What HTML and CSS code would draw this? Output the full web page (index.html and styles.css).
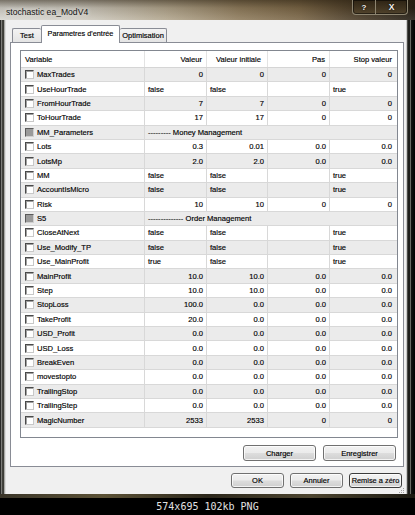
FILE: index.html
```html
<!DOCTYPE html>
<html>
<head>
<meta charset="utf-8">
<link rel="stylesheet" href="styles.css">
</head>
<body>
<div class="screen">
  <div class="window">
    <div class="titlebar">
      <span class="title">stochastic ea_ModV4</span>
      <div class="caption-buttons">
        <span class="cb help">?</span>
        <span class="cb close">X</span>
      </div>
    </div>
    <div class="winbody">
      <div class="frame-left"></div>
      <div class="client">
        <div class="tabs">
          <div class="tab t-test">Test</div>
          <div class="tab sel t-params">Parametres d'entrée</div>
          <div class="tab t-opt">Optimisation</div>
        </div>
        <div class="panel">
          <div class="grid">
            <div class="hdr">
              <div class="h">Variable</div>
              <div class="h n">Valeur</div>
              <div class="h n vi">Valeur initiale</div>
              <div class="h n">Pas</div>
              <div class="h n last">Stop valeur</div>
            </div>
            <div class="row odd"><div class="c v"><span class="cbx"></span>MaxTrades</div><div class="c n">0</div><div class="c n">0</div><div class="c n">0</div><div class="c n last">0</div></div>
            <div class="row"><div class="c v"><span class="cbx"></span>UseHourTrade</div><div class="c">false</div><div class="c">false</div><div class="c"></div><div class="c last">true</div></div>
            <div class="row odd"><div class="c v"><span class="cbx"></span>FromHourTrade</div><div class="c n">7</div><div class="c n">7</div><div class="c n">0</div><div class="c n last">0</div></div>
            <div class="row"><div class="c v"><span class="cbx"></span>ToHourTrade</div><div class="c n">17</div><div class="c n">17</div><div class="c n">0</div><div class="c n last">0</div></div>
            <div class="row odd"><div class="c v"><span class="cbx on"></span>MM_Parameters</div><div class="c span">--------- Money Management</div></div>
            <div class="row"><div class="c v"><span class="cbx"></span>Lots</div><div class="c n">0.3</div><div class="c n">0.01</div><div class="c n">0.0</div><div class="c n last">0.0</div></div>
            <div class="row odd"><div class="c v"><span class="cbx"></span>LotsMp</div><div class="c n">2.0</div><div class="c n">2.0</div><div class="c n">0.0</div><div class="c n last">0.0</div></div>
            <div class="row"><div class="c v"><span class="cbx"></span>MM</div><div class="c">false</div><div class="c">false</div><div class="c"></div><div class="c last">true</div></div>
            <div class="row odd"><div class="c v"><span class="cbx"></span>AccountIsMicro</div><div class="c">false</div><div class="c">false</div><div class="c"></div><div class="c last">true</div></div>
            <div class="row"><div class="c v"><span class="cbx"></span>Risk</div><div class="c n">10</div><div class="c n">10</div><div class="c n">0</div><div class="c n last">0</div></div>
            <div class="row odd"><div class="c v"><span class="cbx on"></span>S5</div><div class="c span">-------------- Order Management</div></div>
            <div class="row"><div class="c v"><span class="cbx"></span>CloseAtNext</div><div class="c">false</div><div class="c">false</div><div class="c"></div><div class="c last">true</div></div>
            <div class="row odd"><div class="c v"><span class="cbx"></span>Use_Modify_TP</div><div class="c">false</div><div class="c">false</div><div class="c"></div><div class="c last">true</div></div>
            <div class="row"><div class="c v"><span class="cbx"></span>Use_MainProfit</div><div class="c">true</div><div class="c">false</div><div class="c"></div><div class="c last">true</div></div>
            <div class="row odd"><div class="c v"><span class="cbx"></span>MainProfit</div><div class="c n">10.0</div><div class="c n">10.0</div><div class="c n">0.0</div><div class="c n last">0.0</div></div>
            <div class="row"><div class="c v"><span class="cbx"></span>Step</div><div class="c n">10.0</div><div class="c n">10.0</div><div class="c n">0.0</div><div class="c n last">0.0</div></div>
            <div class="row odd"><div class="c v"><span class="cbx"></span>StopLoss</div><div class="c n">100.0</div><div class="c n">0.0</div><div class="c n">0.0</div><div class="c n last">0.0</div></div>
            <div class="row"><div class="c v"><span class="cbx"></span>TakeProfit</div><div class="c n">20.0</div><div class="c n">0.0</div><div class="c n">0.0</div><div class="c n last">0.0</div></div>
            <div class="row odd"><div class="c v"><span class="cbx"></span>USD_Profit</div><div class="c n">0.0</div><div class="c n">0.0</div><div class="c n">0.0</div><div class="c n last">0.0</div></div>
            <div class="row"><div class="c v"><span class="cbx"></span>USD_Loss</div><div class="c n">0.0</div><div class="c n">0.0</div><div class="c n">0.0</div><div class="c n last">0.0</div></div>
            <div class="row odd"><div class="c v"><span class="cbx"></span>BreakEven</div><div class="c n">0.0</div><div class="c n">0.0</div><div class="c n">0.0</div><div class="c n last">0.0</div></div>
            <div class="row"><div class="c v"><span class="cbx"></span>movestopto</div><div class="c n">0.0</div><div class="c n">0.0</div><div class="c n">0.0</div><div class="c n last">0.0</div></div>
            <div class="row odd"><div class="c v"><span class="cbx"></span>TrailingStop</div><div class="c n">0.0</div><div class="c n">0.0</div><div class="c n">0.0</div><div class="c n last">0.0</div></div>
            <div class="row"><div class="c v"><span class="cbx"></span>TrailingStep</div><div class="c n">0.0</div><div class="c n">0.0</div><div class="c n">0.0</div><div class="c n last">0.0</div></div>
            <div class="row odd"><div class="c v"><span class="cbx"></span>MagicNumber</div><div class="c n">2533</div><div class="c n">2533</div><div class="c n">0</div><div class="c n last">0</div></div>
          </div>
          <div class="panel-buttons">
            <div class="btn wide">Charger</div>
            <div class="btn wide">Enregistrer</div>
          </div>
        </div>
        <div class="dialog-buttons">
          <div class="btn small">OK</div>
          <div class="btn small">Annuler</div>
          <div class="btn small focus">Remise a zéro</div>
        </div>
        <svg class="grip" width="7" height="7" viewBox="0 0 7 7">
          <rect x="5" y="1" width="1" height="1" fill="#a0a0a0"/>
          <rect x="3" y="3" width="1" height="1" fill="#a0a0a0"/>
          <rect x="5" y="3" width="1" height="1" fill="#a0a0a0"/>
          <rect x="1" y="5" width="1" height="1" fill="#a0a0a0"/>
          <rect x="3" y="5" width="1" height="1" fill="#a0a0a0"/>
          <rect x="5" y="5" width="1" height="1" fill="#a0a0a0"/>
        </svg>
      </div>
      <div class="frame-right"></div>
    </div>
    <div class="frame-bottom"></div>
  </div>
  <div class="caption">574x695 102kb PNG</div>
</div>
</body>
</html>
```

FILE: styles.css
```css
* { box-sizing: border-box; margin: 0; padding: 0; }
html, body { width: 415px; height: 515px; overflow: hidden; background: #000; }
body { font-family: "Liberation Sans", Arial, sans-serif; color: #000; }

.screen { width: 415px; height: 515px; display: flex; flex-direction: column; }
.window { height: 498px; display: flex; flex-direction: column; background: #2b2820; }

.titlebar {
  height: 20px;
  display: flex;
  align-items: flex-start;
  background:
    linear-gradient(to bottom, rgba(40, 30, 15, 0.55) 0%, rgba(40, 30, 15, 0.15) 40%, rgba(255, 255, 255, 0.1) 100%),
    linear-gradient(to right, #d9d8d2 0%, #d2cfc6 18%, #b3a78f 40%, #8f7c5d 58%, #7a6647 72%, #4a3c28 86%, #231d14 100%);
}
.title {
  font-size: 8.6px;
  line-height: 10px;
  padding: 7px 0 0 6px;
  color: #151515;
  text-shadow: 0 0 4px rgba(255, 255, 255, 0.9);
}
.caption-buttons {
  margin-left: auto;
  margin-right: 7px;
  height: 15px;
  display: flex;
  border: 1px solid #8c8470;
  border-top: none;
  border-radius: 0 0 4px 4px;
  background: linear-gradient(to bottom, rgba(45, 35, 20, 0.9), rgba(85, 70, 45, 0.8));
  box-shadow: inset 0 0 0 1px rgba(0, 0, 0, 0.5);
}
.cb {
  display: flex;
  align-items: center;
  justify-content: center;
  color: #f4f4f0;
  font-weight: bold;
  font-size: 8px;
  text-shadow: 0 0 2px #000;
}
.cb.help { width: 23px; border-right: 1px solid #8c8470; }
.cb.close { width: 31px; font-size: 8.5px; }

.winbody { flex: 1; display: flex; }
.frame-left {
  width: 6px;
  background: linear-gradient(to right, #2a2a28 0, #2a2a28 1px, #7c7c78 1px, #7c7c78 2px, #45453f 2px, #3a3a35 4px, #a8a8a4 4px, #a8a8a4 5px, #dcdcdc 5px);
}
.frame-right {
  flex: 1;
  background: linear-gradient(to right, #c8c8c8 0, #c8c8c8 1px, #4a4a46 1px, #4a4a46 2px, #1e1e1b 2px, #1e1e1b 4px, #6a6a64 4px, #6a6a64 5px, #141412 5px, #000 9px);
}
.frame-bottom {
  height: 4px;
  background: linear-gradient(to right, #3a3528 0%, #5c5236 25%, #2c271b 50%, #4d4530 75%, #1a1810 100%);
}

.client {
  width: 400px;
  background: #f0f0f0;
  padding: 5px 2px 0 4px;
  display: flex;
  flex-direction: column;
  position: relative;
}

.tabs {
  height: 18px;
  margin-bottom: -1px;
  padding-left: 2px;
  display: flex;
  align-items: flex-end;
  position: relative;
  z-index: 1;
}
.tab {
  height: 14px;
  margin-bottom: 1px;
  border: 1px solid #898c95;
  border-bottom: none;
  border-radius: 2px 2px 0 0;
  background: linear-gradient(to bottom, #f3f3f3, #e4e4e4);
  font-size: 7.5px;
  display: flex;
  align-items: center;
  justify-content: center;
  white-space: nowrap;
  -webkit-text-stroke: 0.15px #000;
}
.t-test { width: 29px; border-right: none; }
.t-params { width: 79px; }
.t-opt { width: 47px; border-left: none; }
.tab.sel {
  height: 18px;
  margin-bottom: 0;
  background: #fff;
  align-items: flex-start;
  padding-top: 3px;
  font-size: 7.3px;
}

.panel {
  height: 425px;
  border: 1px solid #898c95;
  background: #fff;
  padding: 7px 5px 5px 9px;
  display: flex;
  flex-direction: column;
}

.grid {
  height: 388px;
  border: 1px solid #828790;
  background: #fff;
  font-size: 7.6px;
  -webkit-text-stroke: 0.15px #000;
}
.hdr, .row {
  display: grid;
  grid-template-columns: 124px 62px 61px 62px 67px;
}
.hdr { height: 17px; border-bottom: 1px solid #d5d5d5; background: #fff; }
.h {
  display: flex;
  align-items: center;
  padding: 0 4px;
  border-right: 1px solid #e3e3e3;
  white-space: nowrap;
}
.h.n { justify-content: flex-end; }
.h.vi { padding-right: 6px; }
.h.last { border-right: none; padding-right: 5px; }

.row { height: 14.4px; border-bottom: 1px solid #d8d8d8; background: #fff; }
.row.odd { background: #ebebeb; }
.c {
  display: flex;
  align-items: center;
  padding: 0 3px;
  border-right: 1px solid #d8d8d8;
  white-space: nowrap;
  overflow: hidden;
}
.c.n { justify-content: flex-end; }
.c.last { border-right: none; }
.c.n.last { padding-right: 5px; }
.c.v { padding-left: 4px; gap: 3px; }
.c.span { grid-column: 2 / 6; border-right: none; }

.cbx {
  width: 9px;
  height: 9px;
  flex: none;
  background: #fff;
  border: 1px solid;
  border-color: #4a4a4a #c8c8c8 #c8c8c8 #4a4a4a;
  box-shadow: inset 1px 1px 0 #a0a0a0;
}
.cbx.on { background: #9a9a9a; border-color: #5a5a5a #d0d0d0 #d0d0d0 #5a5a5a; box-shadow: none; }

.panel-buttons {
  margin-top: 7px;
  padding-right: 2px;
  display: flex;
  justify-content: flex-end;
  gap: 7px;
}
.dialog-buttons {
  margin-top: 6px;
  padding-right: 2px;
  display: flex;
  justify-content: flex-end;
  gap: 6px;
}
.btn {
  border: 1px solid #707070;
  border-radius: 3px;
  background: linear-gradient(to bottom, #f2f2f2 0%, #ebebeb 48%, #dddddd 52%, #cfcfcf 100%);
  box-shadow: inset 0 0 0 1px rgba(255, 255, 255, 0.75);
  font-size: 7.5px;
  display: flex;
  align-items: center;
  justify-content: center;
  white-space: nowrap;
  -webkit-text-stroke: 0.15px #000;
}
.btn.wide { width: 73px; height: 16px; }
.btn.small { width: 53px; height: 15px; }
.btn.focus { border-color: #3c3c3c; font-size: 7.4px; }

.grip { position: absolute; right: 1px; bottom: 0; }

.caption {
  flex: 1;
  background: #000;
  color: #e2e2e2;
  font-family: "DejaVu Sans Mono", monospace;
  font-size: 10px;
  display: flex;
  align-items: center;
  justify-content: center;
  padding-bottom: 1px;
}
```
